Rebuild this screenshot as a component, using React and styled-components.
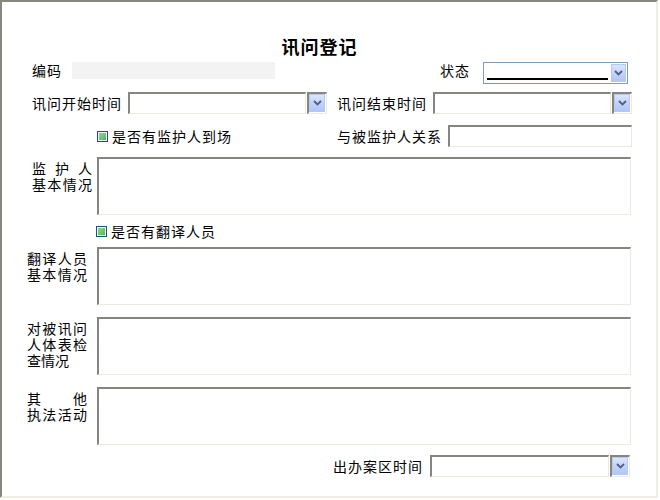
import React from 'react';
import styled, { createGlobalStyle } from 'styled-components';

const GlobalStyle = createGlobalStyle`
    html, body {
        margin: 0;
        padding: 0;
        background: #ffffff;
    }
    body {
        font-family: "Noto Sans CJK SC", "Noto Sans", sans-serif;
        font-size: 14px;
        color: #000;
    }
`;

const StyledFrame = styled.div`
    width: 658px;
    height: 498px;
    box-sizing: border-box;
    border-style: solid;
    border-width: 2px;
    border-color: #87877f #f0eee2 #f0eee2 #87877f;
    background: #ffffff;
    padding-left: 25px;
`;

const StyledTitle = styled.h1`
    margin: 0;
    padding-top: 34px;
    padding-right: 44px;
    height: 20px;
    line-height: 20px;
    font-size: 18px;
    font-weight: 700;
    letter-spacing: 1px;
    text-align: center;
`;

const StyledRow = styled.div`
    display: flex;
    align-items: ${({ $align }) => $align || 'center'};
    height: ${({ $height }) => $height || 22}px;
    margin-top: ${({ $gap }) => $gap}px;
`;

const StyledHalf = styled.div`
    box-sizing: border-box;
    display: flex;
    align-items: inherit;
    width: ${({ $width }) => $width}px;
    padding-left: ${({ $indent }) => $indent || 0}px;
    flex-shrink: 0;
`;

const StyledLabel = styled.span`
    display: block;
    width: ${({ $width }) => ($width ? `${$width}px` : 'auto')};
    margin-right: ${({ $gap }) => $gap || 0}px;
    text-align: ${({ $right }) => ($right ? 'right' : 'left')};
    font-size: 14px;
    line-height: 16px;
    letter-spacing: 1px;
    white-space: nowrap;
    flex-shrink: 0;
`;

const StyledCode = styled.div`
    width: 203px;
    height: 17px;
    background: #f3f3f3;
    align-self: flex-start;
`;

const StyledInput = styled.div`
    box-sizing: border-box;
    width: ${({ $width }) => $width}px;
    height: 22px;
    border-style: solid;
    border-width: 2px 1px 1px 2px;
    border-color: #868680 #eceadf #eceadf #868680;
    background: #ffffff;
    flex-shrink: 0;
`;

const StyledDropWell = styled.div`
    box-sizing: border-box;
    width: ${({ $width }) => $width || 20}px;
    height: 22px;
    margin-left: 1px;
    border-style: solid;
    border-width: 2px 1px 1px 2px;
    border-color: #868680 #eceadf #eceadf #868680;
    padding: 0 1px 1px 0;
    display: flex;
    flex-shrink: 0;
`;

const StyledArrow = styled.div`
    box-sizing: border-box;
    flex: ${({ $fixed }) => ($fixed ? 'none' : '1')};
    width: ${({ $width }) => ($width ? `${$width}px` : 'auto')};
    height: ${({ $height }) => ($height ? `${$height}px` : 'auto')};
    border: 1px solid #b7c9f1;
    background: linear-gradient(to bottom, #dbe5fd 0%, #c3d4fa 50%, #b2c6f4 100%);
    display: flex;
    align-items: center;
    justify-content: center;
`;

const StyledSelect = styled.div`
    box-sizing: border-box;
    width: 145px;
    height: 22px;
    border: 1px solid #7f9db9;
    background: #ffffff;
    display: flex;
    align-items: center;
    padding: 1px;
    align-self: flex-start;
`;

const StyledSelected = styled.div`
    flex: 1;
    align-self: flex-end;
    height: 2px;
    margin: 0 3px 2px 2px;
    background: #000000;
`;

const StyledCheck = styled.span`
    box-sizing: border-box;
    width: 11px;
    height: 11px;
    border: 1px solid #1f4f7f;
    background: #f4f4f0;
    display: flex;
    align-items: center;
    justify-content: center;
    margin-right: 4px;
    flex-shrink: 0;

    &::after {
        content: '';
        width: 7px;
        height: 7px;
        background: linear-gradient(135deg, #8ad88a 0%, #57b45b 100%);
    }
`;

const StyledAreaRow = styled.div`
    display: flex;
    margin-top: ${({ $gap }) => $gap}px;
`;

const StyledAreaLabel = styled.div`
    box-sizing: border-box;
    width: 70px;
    padding-top: 3px;
    padding-left: ${({ $shift }) => $shift || 0}px;
    padding-right: ${({ $shift }) => 10 - ($shift || 0)}px;
    font-size: 14px;
    line-height: 16px;
    flex-shrink: 0;
`;

const StyledSpread = styled.div`
    display: flex;
    justify-content: space-between;
    height: 16px;
`;

const StyledTextArea = styled.div`
    box-sizing: border-box;
    width: 534px;
    height: 58px;
    border-style: solid;
    border-width: 2px 1px 1px 2px;
    border-color: #868680 #eceadf #eceadf #868680;
    background: #ffffff;
`;

const Chevron = () => (
    <svg width="9" height="6" viewBox="0 0 9 6">
        <path d="M1 1 L4.5 4.5 L8 1" fill="none" stroke="#4d6185" strokeWidth="1.8" />
    </svg>
);

const DateField = ({ width }) => (
    <>
        <StyledInput $width={width} />
        <StyledDropWell>
            <StyledArrow>
                <Chevron />
            </StyledArrow>
        </StyledDropWell>
    </>
);

const Spread = ({ text }) => (
    <StyledSpread>
        {text.split('').map((c, i) => (
            <span key={i}>{c}</span>
        ))}
    </StyledSpread>
);

const AreaRow = ({ gap, shift, lines }) => (
    <StyledAreaRow $gap={gap}>
        <StyledAreaLabel $shift={shift}>
            {lines.map((l, i) => (l.spread ? <Spread key={i} text={l.text} /> : <div key={i}>{l.text}</div>))}
        </StyledAreaLabel>
        <StyledTextArea />
    </StyledAreaRow>
);

const App = () => {
    return (
        <>
            <GlobalStyle />
            <StyledFrame>
                <StyledTitle>讯问登记</StyledTitle>

                <StyledRow $gap={6} $align="flex-start">
                    <StyledHalf $width={310} $indent={5}>
                        <StyledLabel $width={40}>编码</StyledLabel>
                        <StyledCode />
                    </StyledHalf>
                    <StyledHalf $width={300}>
                        <StyledLabel $width={133} $right $gap={13}>状态</StyledLabel>
                        <StyledSelect>
                            <StyledSelected />
                            <StyledArrow $fixed $width={15} $height={18}>
                                <Chevron />
                            </StyledArrow>
                        </StyledSelect>
                    </StyledHalf>
                </StyledRow>

                <StyledRow $gap={8}>
                    <StyledHalf $width={310} $indent={5}>
                        <StyledLabel $gap={6}>讯问开始时间</StyledLabel>
                        <DateField width={178} />
                    </StyledHalf>
                    <StyledHalf $width={300}>
                        <StyledLabel $gap={6}>讯问结束时间</StyledLabel>
                        <DateField width={178} />
                    </StyledHalf>
                </StyledRow>

                <StyledRow $gap={11}>
                    <StyledHalf $width={310} $indent={70}>
                        <StyledCheck />
                        <StyledLabel>是否有监护人到场</StyledLabel>
                    </StyledHalf>
                    <StyledHalf $width={300}>
                        <StyledLabel $gap={6}>与被监护人关系</StyledLabel>
                        <StyledInput $width={184} />
                    </StyledHalf>
                </StyledRow>

                <AreaRow
                    gap={10}
                    shift={5}
                    lines={[{ text: '监护人', spread: true }, { text: '基本情况', spread: true }]}
                />

                <StyledRow $gap={5}>
                    <StyledHalf $width={310} $indent={69}>
                        <StyledCheck />
                        <StyledLabel>是否有翻译人员</StyledLabel>
                    </StyledHalf>
                </StyledRow>

                <AreaRow
                    gap={5}
                    lines={[{ text: '翻译人员', spread: true }, { text: '基本情况', spread: true }]}
                />

                <AreaRow
                    gap={12}
                    lines={[{ text: '对被讯问', spread: true }, { text: '人体表检', spread: true }, { text: '查情况' }]}
                />

                <AreaRow
                    gap={12}
                    lines={[{ text: '其他', spread: true }, { text: '执法活动', spread: true }]}
                />

                <StyledRow $gap={10}>
                    <StyledHalf $width={306} />
                    <StyledHalf $width={300}>
                        <StyledLabel $gap={7}>出办案区时间</StyledLabel>
                        <DateField width={179} />
                    </StyledHalf>
                </StyledRow>
            </StyledFrame>
        </>
    );
};

export default App;
